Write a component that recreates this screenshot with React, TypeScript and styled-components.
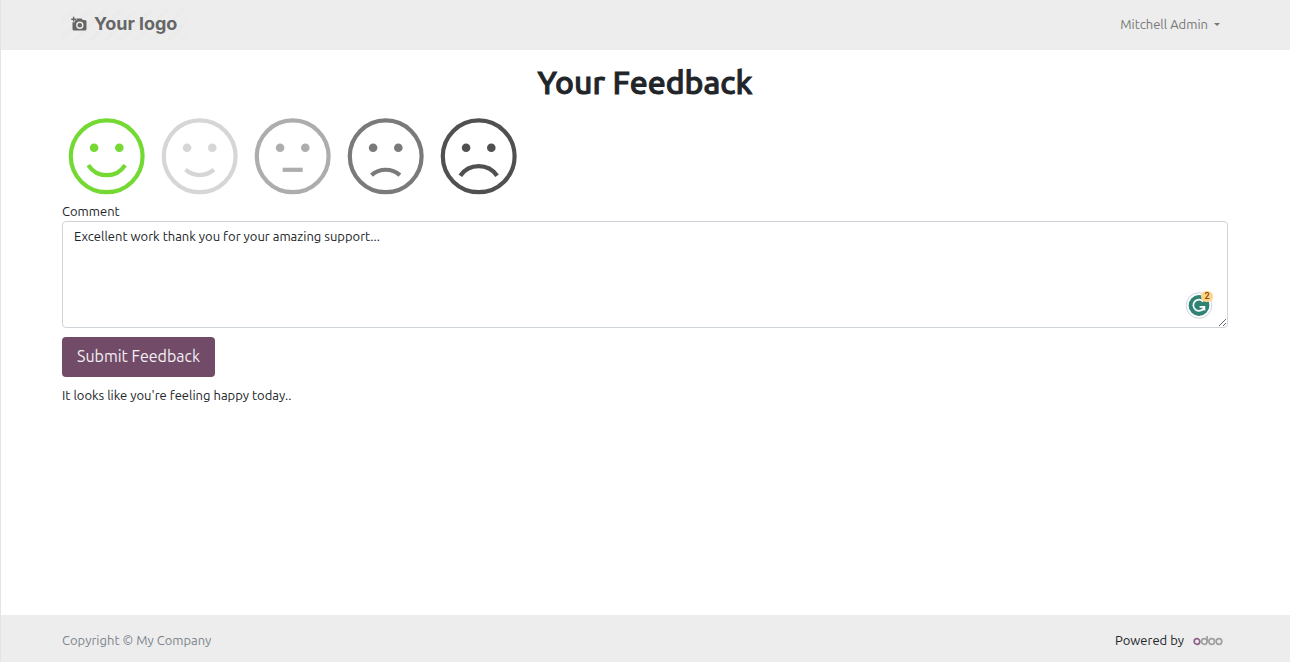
import React, { useState } from "react";
import styled, { createGlobalStyle } from "styled-components";

const GlobalStyle = createGlobalStyle`
  *, *::before, *::after { box-sizing: border-box; }
  body {
    margin: 0;
    background: #fff;
    color: #212529;
    font-family: Ubuntu, "Noto Sans", sans-serif;
    font-size: 13px;
    line-height: 20px;
  }
`;

const Page = styled.div`
  display: flex;
  flex-direction: column;
  min-height: 100vh;
  border-left: 1px solid #e4e4e4;
`;

const Bar = styled.div<{ $height: number }>`
  display: flex;
  align-items: center;
  justify-content: space-between;
  min-height: ${(p) => p.$height}px;
  padding: 0 62px 0 61px;
  background: #ededed;
`;

const Footer = styled(Bar)`
  padding-top: 3px;
`;

const LogoLink = styled.a`
  display: flex;
  align-items: center;
  gap: 7px;
  width: 125px;
  height: 33px;
  padding: 0 0 2px 9px;
  color: #666;
  font-family: Inter, sans-serif;
  font-size: 18px;
  font-weight: 700;
  line-height: 24px;
  white-space: nowrap;
  text-decoration: none;
  background: repeating-linear-gradient(135deg, #ededed 0 7px, #ebebeb 7px 11px);
`;

const UserButton = styled.button`
  display: flex;
  align-items: center;
  gap: 6px;
  padding: 8px 8px 10px;
  border: 0;
  background: none;
  color: #777;
  font: inherit;
  cursor: pointer;
`;

const Caret = styled.span`
  border: 3px solid transparent;
  border-top-color: currentColor;
  border-bottom: 0;
`;

const Main = styled.main`
  flex: 1;
  padding: 13px 62px 0 61px;
`;

const Title = styled.h1`
  margin: 0 0 17px;
  font-size: 32px;
  font-weight: 500;
  line-height: 38px;
  text-align: center;
  -webkit-text-stroke: 1px currentColor;
`;

const Ratings = styled.fieldset`
  display: flex;
  gap: 17px;
  margin: 0 0 7px;
  padding: 0 7px;
  border: 0;
`;

const Rating = styled.label<{ $color: string }>`
  position: relative;
  display: block;
  width: 76px;
  height: 76px;
  color: ${(p) => p.$color};
  cursor: pointer;
`;

const RatingInput = styled.input`
  position: absolute;
  inset: 0;
  width: 100%;
  height: 100%;
  margin: 0;
  opacity: 0;
  cursor: pointer;
`;

const FieldLabel = styled.label`
  display: block;
`;

const CommentBox = styled.div`
  position: relative;
  display: flex;
  margin-bottom: 9px;
`;

const Comment = styled.textarea`
  flex: 1;
  height: 107px;
  padding: 4px 11px;
  border: 1px solid #ced4da;
  border-radius: 4px;
  background: #fff;
  color: #212529;
  font: inherit;
  resize: vertical;
`;

const Checker = styled.button`
  position: absolute;
  right: 15px;
  bottom: 9px;
  width: 28px;
  height: 28px;
  padding: 0;
  border: 0;
  background: none;
  cursor: pointer;
`;

const CheckerCount = styled.span`
  position: absolute;
  top: 0;
  right: 0;
  width: 12px;
  height: 11px;
  border-radius: 6px;
  background: #fdd48a;
  color: #8a4b08;
  font-family: Roboto, sans-serif;
  font-size: 9px;
  font-weight: 600;
  line-height: 11px;
  text-align: center;
`;

const Submit = styled.button`
  display: block;
  height: 40px;
  margin-bottom: 8px;
  padding: 0 15px 2px;
  border: 0;
  border-radius: 4px;
  background: #714b67;
  color: #f4eff3;
  font: inherit;
  font-size: 16px;
  cursor: pointer;
`;

const Mood = styled.p`
  margin: 0;
`;

const Copyright = styled.span`
  color: #7d858c;
`;

const Powered = styled.div`
  display: flex;
  align-items: center;
  gap: 9px;
  padding-right: 5px;
`;

const OdooLink = styled.a`
  display: flex;
`;

const faces = [
  { name: "Very happy", color: "#75d934", mouth: "M19.6 46.8A21.8 21.8 0 0 0 56.4 46.8" },
  { name: "Happy", color: "#d6d6d6", mouth: "M23.8 51.4A21.5 21.5 0 0 0 52.2 51.4" },
  { name: "Neutral", color: "#adadad", mouth: "M28 51.5H48" },
  { name: "Unhappy", color: "#7a7a7a", mouth: "M23.8 56.8A21.5 21.5 0 0 1 52.2 56.8" },
  { name: "Very unhappy", color: "#505050", mouth: "M19.6 57.4A22.5 22.5 0 0 1 56.4 57.4" },
];

const Face = ({ mouth }: { mouth: string }) => (
  <svg width="76" height="76" viewBox="0.3 -0.3 76 76" overflow="visible" fill="none" stroke="currentColor" strokeWidth="4.2" aria-hidden="true">
    <circle cx="38" cy="38" r="35.9" />
    <circle cx="25.4" cy="29.5" r="4.3" fill="currentColor" stroke="none" />
    <circle cx="50.6" cy="29.5" r="4.3" fill="currentColor" stroke="none" />
    <path d={mouth} />
  </svg>
);

const CameraIcon = () => (
  <svg width="16" height="16" viewBox="0 0 16 16" aria-hidden="true">
    <path
      d="M5.5 2.5H10.5L11.8 4H14Q15.5 4 15.5 5.5V13Q15.5 14.5 14 14.5H3Q1.5 14.5 1.5 13V6.2H3.8V4.2H5.5Z"
      fill="#666"
    />
    <path d="M2.6 .8V5.6M.2 3.2H5" stroke="#666" strokeWidth="1.4" />
    <circle cx="8.8" cy="9.2" r="3" fill="none" stroke="#ededed" strokeWidth="1.4" />
  </svg>
);

const OdooMark = () => (
  <svg width="30" height="11" viewBox="0 0 30 11" fill="none" stroke="#a0a0a0" strokeWidth="1.7" role="img" aria-label="Odoo">
    <circle cx="4" cy="6.5" r="2.8" stroke="#8f6387" />
    <circle cx="11.3" cy="6.5" r="2.8" />
    <path d="M14.1 1V6.5" />
    <circle cx="18.7" cy="6.5" r="2.8" />
    <circle cx="26" cy="6.5" r="2.8" />
  </svg>
);

const CheckerIcon = () => (
  <svg width="28" height="28" viewBox="0 0 28 28" fill="none" aria-hidden="true">
    <circle cx="14" cy="14.5" r="12.8" fill="#fff" stroke="#cfd3e0" />
    <circle cx="14" cy="14.5" r="10.4" fill="#2f8373" />
    <path d="M18.2 10.6A5.6 5.6 0 1 0 18.8 17M14.6 15.8H19.4V19.6" stroke="#fff" strokeWidth="1.7" />
  </svg>
);

export default function App() {
  const [rating, setRating] = useState(0);
  return (
    <>
      <GlobalStyle />
      <Page>
        <Bar as="header" $height={50}>
          <LogoLink href="#">
            <CameraIcon />
            Your logo
          </LogoLink>
          <UserButton type="button" aria-haspopup="menu">
            Mitchell Admin
            <Caret />
          </UserButton>
        </Bar>
        <Main>
          <Title>Your Feedback</Title>
          <form onSubmit={(e) => e.preventDefault()}>
            <Ratings aria-label="Rating">
              {faces.map((face, i) => (
                <Rating key={face.name} $color={face.color}>
                  <RatingInput
                    type="radio"
                    name="rating"
                    aria-label={face.name}
                    checked={rating === i}
                    onChange={() => setRating(i)}
                  />
                  <Face mouth={face.mouth} />
                </Rating>
              ))}
            </Ratings>
            <FieldLabel htmlFor="comment">Comment</FieldLabel>
            <CommentBox>
              <Comment id="comment" spellCheck={false} defaultValue="Excellent work thank you for your amazing support..." />
              <Checker type="button" aria-label="Writing suggestions">
                <CheckerIcon />
                <CheckerCount>2</CheckerCount>
              </Checker>
            </CommentBox>
            <Submit type="submit">Submit Feedback</Submit>
          </form>
          <Mood>It looks like you're feeling happy today..</Mood>
        </Main>
        <Footer as="footer" $height={47}>
          <Copyright>Copyright © My Company</Copyright>
          <Powered>
            Powered by
            <OdooLink href="#">
              <OdooMark />
            </OdooLink>
          </Powered>
        </Footer>
      </Page>
    </>
  );
}
